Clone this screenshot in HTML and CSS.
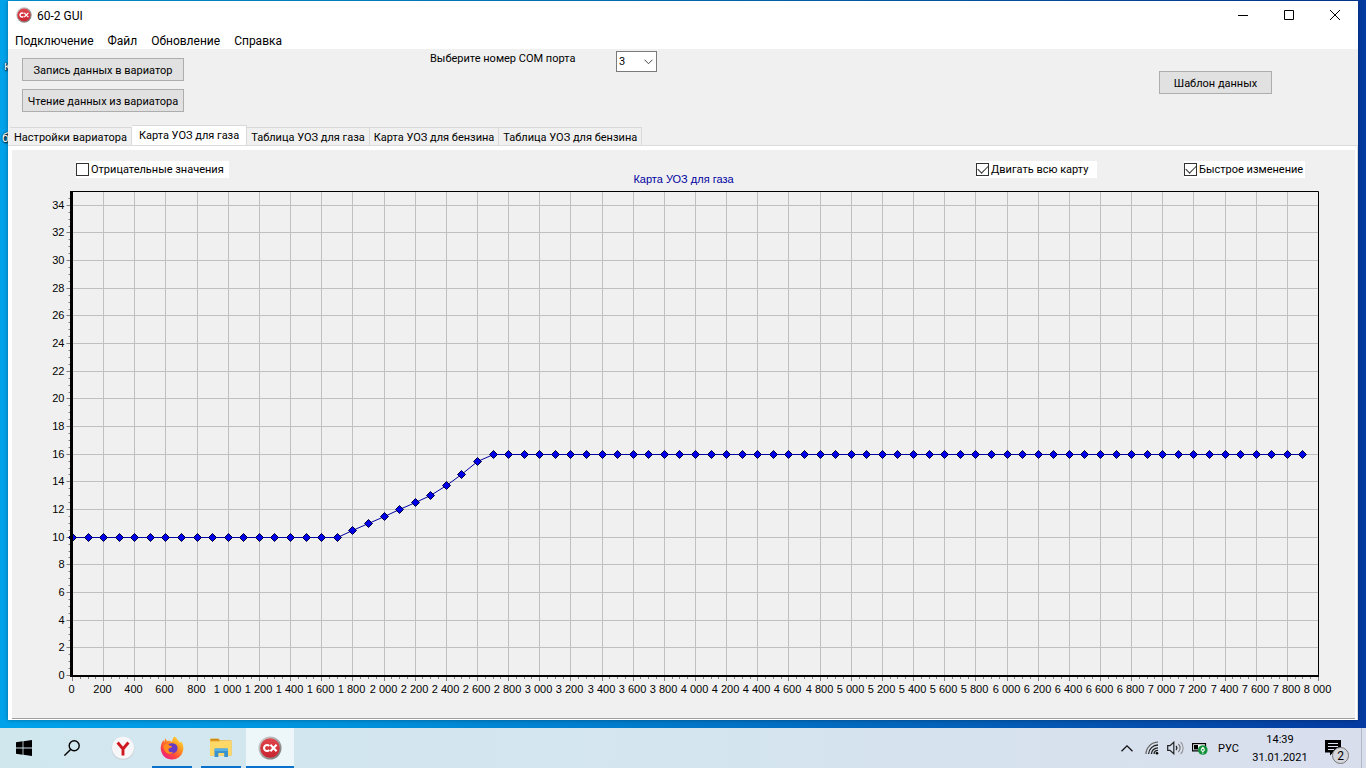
FILE: index.html
```html
<!DOCTYPE html>
<html lang="ru">
<head>
<meta charset="utf-8">
<title>60-2 GUI</title>
<link rel="stylesheet" href="styles.css">
</head>
<body>
<svg class="defs" width="0" height="0" aria-hidden="true">
  <defs>
    <linearGradient id="ring" x1="0" y1="0" x2="1" y2="1"><stop offset="0" stop-color="#d8d8d8"/><stop offset="1" stop-color="#6f6f6f"/></linearGradient>
    <linearGradient id="red" x1="0" y1="0" x2="0" y2="1"><stop offset="0" stop-color="#e0474e"/><stop offset="1" stop-color="#c82430"/></linearGradient>
    <linearGradient id="fox" x1="1" y1="0" x2="0.2" y2="1"><stop offset="0" stop-color="#fff04a"/><stop offset="0.4" stop-color="#ff9a1f"/><stop offset="0.7" stop-color="#ff4a3c"/><stop offset="1" stop-color="#e8188a"/></linearGradient>
    <symbol id="cx" viewBox="0 0 24 24">
      <circle cx="12" cy="12" r="11.5" fill="url(#ring)"/>
      <circle cx="12" cy="12" r="9.8" fill="url(#red)"/>
      <path d="M11.2 9.9A3 3 0 1 0 11.2 14.1M12.4 8.8L18.6 15.2M18.6 8.8L12.4 15.2" fill="none" stroke="#fff" stroke-width="2.1"/>
    </symbol>
  </defs>
</svg>

<div class="desktop">
  <span class="shortcut shortcut-top">к</span>
  <span class="shortcut shortcut-low">б</span>
  <main class="window">
    <header class="titlebar">
      <svg class="app-icon"><use href="#cx"/></svg>
      <h1 class="title">60-2 GUI</h1>
      <button class="win-btn" aria-label="Свернуть"><svg width="10" height="10" viewBox="0 0 10 10"><path d="M0 5.5H10"/></svg></button>
      <button class="win-btn" aria-label="Развернуть"><svg width="10" height="10" viewBox="0 0 10 10"><path d="M.5 .5H9.5V9.5H.5Z"/></svg></button>
      <button class="win-btn" aria-label="Закрыть"><svg width="10" height="10" viewBox="0 0 10 10"><path d="M0 0L10 10M10 0L0 10"/></svg></button>
    </header>
    <nav class="menubar">
      <button>Подключение</button>
      <button>Файл</button>
      <button>Обновление</button>
      <button>Справка</button>
    </nav>
    <section class="toolbar">
      <div class="data-buttons">
        <button class="btn">Запись данных в вариатор</button>
        <button class="btn">Чтение данных из вариатора</button>
      </div>
      <div class="port">
        <label for="port">Выберите номер COM порта</label>
        <div class="select-box">
          <select id="port"><option>3</option></select>
          <svg class="chevron" width="9" height="6" viewBox="0 0 9 6"><path d="M.5 .7L4.5 4.7L8.5 .7"/></svg>
        </div>
      </div>
      <button class="btn btn-template">Шаблон данных</button>
    </section>
    <div class="tabs" role="tablist">
      <button role="tab" class="tab">Настройки вариатора</button>
      <button role="tab" class="tab active" aria-selected="true">Карта УОЗ для газа</button>
      <button role="tab" class="tab">Таблица УОЗ для газа</button>
      <button role="tab" class="tab">Карта УОЗ для бензина</button>
      <button role="tab" class="tab">Таблица УОЗ для бензина</button>
    </div>
    <section class="page">
      <div class="sheet">
        <div class="options">
          <label class="check"><input type="checkbox">Отрицательные значения</label>
          <h2 class="chart-title">Карта УОЗ для газа</h2>
          <div class="options-right">
            <label class="check"><input type="checkbox" checked>Двигать всю карту</label>
            <label class="check"><input type="checkbox" checked>Быстрое изменение</label>
          </div>
        </div>
        <div class="chart"><svg id="chart"></svg></div>
      </div>
    </section>
  </main>
</div>

<footer class="taskbar">
  <button class="task" aria-label="Пуск"><svg width="16" height="16" viewBox="0 0 16 16"><path d="M0 2.2L6.6 1.3V7.6H0ZM7.4 1.2L16 0V7.6H7.4ZM0 8.4H6.6V14.7L0 13.8ZM7.4 8.4H16V16L7.4 14.8Z"/></svg></button>
  <button class="task" aria-label="Поиск"><svg width="16" height="16" viewBox="0 0 16 16" fill="none" stroke="#000" stroke-width="1.4"><circle cx="10.2" cy="5.8" r="5"/><path d="M6.6 9.4L.4 15.6"/></svg></button>
  <button class="task spaced" aria-label="Яндекс"><svg width="24" height="24" viewBox="0 0 24 24"><circle cx="12" cy="12.5" r="11.3" fill="#c8ccd2"/><circle cx="12" cy="11.8" r="11" fill="#f7f7f9"/><path d="M6.6 6.5L12 13L17.4 6.5M12 12.5V19.5" fill="none" stroke="#d01820" stroke-width="2.9"/></svg></button>
  <button class="task running" aria-label="Firefox"><svg width="24" height="24" viewBox="0 0 24 24"><path d="M14.5 .5C17 2 17.6 4 18.5 5L20.3 6.8L21 5.2C23 7.5 23.6 10.5 23.3 13A11.3 11.3 0 1 1 1.2 9C1.5 7 2.3 5.4 3.5 4.2L4.2 6L5.2 2.2L7 5C9 4.6 10.8 5.1 12 6C12.2 3.8 13 1.8 14.5 .5Z" fill="url(#fox)"/><path d="M8.2 8.5C11 6.6 16 6.8 17.3 10.6C18.5 14.7 15.6 17.4 12.2 17.4C8.8 17.4 7 15 7.1 12.3L9.2 12C11 12 11.4 11 12 10.2L9.6 9.7Z" fill="#673bc4"/><path d="M3.3 10C5 7 8.5 7.8 9.6 9.7L12.2 10.2C11.5 11.6 9.2 12 8.6 12.8C7.6 15.8 10.8 17.2 13.5 15.8C10.5 20 4 17.5 3.3 10Z" fill="#ff8a20"/></svg></button>
  <button class="task running" aria-label="Проводник"><svg width="22" height="20" viewBox="0 0 22 20"><path d="M0 1.5Q0 .5 1 .5H8.5L10 2.3H20.5Q21.5 2.3 21.5 3.3V17.5H0Z" fill="#eba937"/><path d="M0 3.5H9L10.5 2.8H21.5V17.5H0Z" fill="#ffd968"/><path d="M1 1H8.3L9.2 2.5H1Z" fill="#c98a14"/><path d="M4.5 19V11.5Q4.5 10.5 5.5 10.5H17Q18 10.5 18 11.5V19H14.2V15H8.3V19Z" fill="#3a92cf"/><path d="M4.5 11.5Q4.5 10.5 5.5 10.5H17Q18 10.5 18 11.5V13H4.5Z" fill="#58b1e4"/></svg></button>
  <button class="task running current" aria-label="60-2 GUI"><svg width="24" height="24"><use href="#cx"/></svg></button>
  <div class="tray">
    <svg width="12" height="7" viewBox="0 0 12 7" fill="none" stroke="#111" stroke-width="1.3"><path d="M.5 6.3L6 .9L11.5 6.3"/></svg>
    <svg class="wifi" width="14" height="14" viewBox="0 0 14 14" fill="none" stroke="#222" stroke-width="1.3"><path d="M1 13A12 12 0 0 1 13 1.2" stroke="#666"/><path d="M3.6 13A9.4 9.4 0 0 1 13 4"/><path d="M6.4 13A6.6 6.6 0 0 1 13 6.8"/><path d="M9 13A4 4 0 0 1 13 9.4"/><circle cx="12" cy="12.3" r="1.3" fill="#000" stroke="none"/></svg>
    <svg class="sound" width="17" height="14" viewBox="0 0 17 14" fill="none" stroke="#222" stroke-width="1.2"><path d="M.7 4.6H3L6.8 1.2V12.8L3 9.4H.7Z"/><path d="M9 5A3 3 0 0 1 9 9"/><path d="M11.3 3A5.5 5.5 0 0 1 11.3 11" stroke="#777"/><path d="M13.6 1A8.3 8.3 0 0 1 13.6 13" stroke="#999"/></svg>
    <svg class="battery" width="16" height="13" viewBox="0 0 16 13"><path d="M.6 1.6H13.5V8.9H.6Z" fill="#fff" stroke="#000" stroke-width="1.2"/><path d="M2 3H6V7.5H2Z"/><circle cx="10.8" cy="8" r="4.8" fill="#12923a"/><path d="M10.8 4.9Q8.7 6.8 9.2 8.6Q9.8 9.6 10.8 9.6Q11.9 9.6 12.4 8.6Q12.8 6.8 10.8 4.9ZM10.8 9V12" fill="#fff" stroke="#fff" stroke-width=".7"/><circle cx="10.8" cy="7.8" r=".9" fill="#12923a"/></svg>
    <span class="lang">РУС</span>
    <div class="clock"><time>14:39</time><span>31.01.2021</span></div>
    <button class="notify" aria-label="Уведомления">
      <svg width="16" height="16" viewBox="0 0 16 16"><path d="M0 0H16V12.5H8L5 15.5V12.5H0Z"/><path d="M3 3.5H13M3 6.5H13M3 9.5H9" stroke="#dce1ed"/></svg>
      <span class="badge">2</span>
    </button>
    <button class="show-desktop" aria-label="Свернуть все окна"></button>
  </div>
</footer>
<script src="chart.js"></script>
</body>
</html>
```
FILE: styles.css
```css
* { box-sizing: border-box; }

body {
  margin: 0;
  height: 100vh;
  display: flex;
  flex-direction: column;
  overflow: hidden;
  font-family: Roboto, Tahoma, sans-serif;
  font-size: 11px;
  color: #000;
}

button, select, input { font: inherit; color: inherit; }
button { border: 0; padding: 0; background: none; white-space: nowrap; }
h1, h2 { margin: 0; font-weight: 400; }
.defs { position: absolute; }

.desktop {
  position: relative;
  flex: 1;
  display: flex;
  padding: 1px 8px 8px;
  background: linear-gradient(90deg, #00a2ea 0%, #0092dc 25%, #0461b8 70%, #053aa0 100%);
}
.shortcut {
  position: absolute;
  left: 4px;
  font-size: 12px;
  color: #fff;
  text-shadow: 1px 1px 2px #000, 0 0 2px #000;
}
.shortcut-top { top: 59px; }
.shortcut-low { top: 131px; left: 2px; }

.window {
  position: relative;
  flex: 1;
  min-width: 0;
  display: flex;
  flex-direction: column;
  background: #f0f0f0;
  box-shadow: 0 0 4px rgba(0, 0, 0, .35);
}
.titlebar {
  display: flex;
  align-items: center;
  height: 28px;
  padding-left: 8px;
  background: #fff;
}
.app-icon { width: 16px; height: 16px; }
.title { flex: 1; padding: 2px 0 0 5px; font-size: 12px; }
.win-btn { width: 46px; height: 28px; display: grid; place-items: center; }
.win-btn path { fill: none; stroke: #000; }

.menubar { display: flex; gap: 14px; height: 20px; padding: 4px 0 0 7px; background: #fff; }
.menubar button { font-size: 12px; line-height: 16px; }

.toolbar { display: flex; align-items: flex-start; height: 76px; padding-right: 86px; }
.data-buttons { display: flex; flex-direction: column; gap: 8px; padding: 9px 0 0 14px; }
.btn { height: 23px; width: 162px; padding-top: 2px; background: #e1e1e1; border: 1px solid #adadad; }
.port { display: flex; align-items: flex-start; padding: 2px 0 0 246px; }
.port label { width: 186px; line-height: 16px; }
.select-box { position: relative; width: 41px; height: 21px; }
.select-box select {
  appearance: none;
  width: 100%;
  height: 100%;
  padding: 0 2px;
  background: #fff;
  border: 1px solid #7a7a7a;
  border-radius: 0;
}
.chevron { position: absolute; right: 4px; top: 8px; fill: none; stroke: #444; pointer-events: none; }
.btn-template { width: 113px; margin: 22px 0 0 auto; }

.tabs { display: flex; align-items: flex-end; height: 20px; padding-left: 2px; }
.tab {
  height: 18px;
  padding: 2px 4px 0;
  border: 1px solid #d9d9d9;
  border-width: 1px 1px 0 0;
}
.tab.active { height: 20px; padding: 0 7px 1px; background: #fff; }

.page {
  flex: 1;
  display: flex;
  min-height: 0;
  padding: 4px 2px 1px 4px;
  background: #fff;
  border: 1px solid #dcdcdc;
  border-width: 1px 1px 0 0;
}
.sheet {
  flex: 1;
  min-width: 0;
  display: flex;
  flex-direction: column;
  background: #f0f0f0;
  border-bottom: 1px solid #a0a0a0;
}
.options {
  display: grid;
  grid-template-columns: 1fr auto 1fr;
  align-items: start;
  height: 37px;
  padding: 11px 50px 0;
}
.options-right { display: flex; justify-content: flex-end; gap: 87px; }
.check { display: flex; align-items: center; gap: 2px; width: 121px; height: 17px; line-height: 17px; background: #fff; white-space: nowrap; }
.options > .check { width: 153px; margin-left: 14px; }
.check input {
  appearance: none;
  flex: none;
  display: grid;
  place-items: center;
  width: 13px;
  height: 13px;
  margin: 0;
  background: #fff;
  border: 1px solid #333;
}
.check input:checked::after {
  content: "";
  width: 9px;
  height: 5px;
  border: solid #333;
  border-width: 0 0 1px 1px;
  transform: translateY(-2px) rotate(-45deg);
}
.chart-title {
  align-self: end;
  font: 11px/16px "Liberation Sans", Arial, sans-serif;
  color: #0000a0;
}
.chart { flex: 1; min-height: 0; }
.chart svg { display: block; width: 100%; height: 100%; }
.grid { stroke: #c0c0c0; }
.tick { stroke: #808080; }
.frame { fill: none; stroke: #000; }
.axis-line { fill: #000; }
.series { fill: none; stroke: #0000a0; }
.marker { fill: #0000e6; stroke: #000040; }
.tick-label { font: 11px "Liberation Sans", Arial, sans-serif; fill: #000; }

.taskbar {
  flex: none;
  display: flex;
  height: 40px;
  gap: 1px;
  background: linear-gradient(90deg, #d1e7ee 0%, #d4e5ef 50%, #d9deed 100%);
}
.task { width: 48px; height: 40px; display: grid; place-items: center; position: relative; }
.task:first-child { margin-right: -1px; }
.task.spaced { margin-left: 2px; }
.task.running::after {
  content: "";
  position: absolute;
  left: 4px;
  right: 4px;
  bottom: 0;
  height: 2px;
  background: #0a72cc;
}
.task.current { background: #edf6f9; }
.task.current::after { left: 0; right: 0; }

.tray { display: flex; align-items: center; margin-left: auto; font-size: 11px; }
.wifi { margin-left: 12px; }
.sound { margin-left: 8px; }
.battery { margin-left: 8px; }
.lang { margin-left: 10px; width: 24px; }
.clock { display: flex; flex-direction: column; align-items: center; width: 76px; margin-right: 6px; padding-top: 1px; line-height: 18px; }
.notify { position: relative; width: 25px; height: 40px; padding-left: 1px; display: flex; align-items: center; }
.badge {
  position: absolute;
  left: 8px;
  top: 19px;
  width: 17px;
  height: 17px;
  border: 1px solid #777;
  border-radius: 50%;
  background: #d5d7dd;
  font-size: 12px;
  line-height: 16px;
  text-align: center;
}
.show-desktop { width: 5px; height: 40px; margin-left: 12px; border-left: 1px solid #b3b8c6; }
```
FILE: chart.js
```js
const svg = document.getElementById('chart');
const margin = { left: 60, right: 37, top: 4, bottom: 43 };
const maxX = 8000;
const maxY = 35;

// Ignition advance per 100 rpm
const ramp = [10.5, 11, 11.5, 12, 12.5, 13, 13.75, 14.5, 15.5];
const values = Array.from({ length: 80 }, (_, i) => i < 18 ? 10 : (ramp[i - 18] ?? 16));

function draw() {
  const { width, height } = svg.getBoundingClientRect();
  const right = Math.round(width - margin.right);
  const bottom = Math.round(height - margin.bottom);
  const px = v => Math.round(margin.left + v / maxX * (right - margin.left)) + 0.5;
  const py = v => Math.round(bottom - v / maxY * (bottom - margin.top)) + 0.5;
  const left = px(0);
  const top = py(maxY);
  let out = '';

  for (let v = 0; v <= maxX; v += 50) {
    const x = px(v);
    const major = v % 200 === 0;
    if (major) {
      out += `<path class="grid" d="M${x} ${top}V${py(0)}"/>`;
      const label = v < 1000 ? v : Math.floor(v / 1000) + ' ' + String(v % 1000).padStart(3, '0');
      out += `<text class="tick-label" text-anchor="middle" x="${x - 1}" y="${bottom + 18}">${label}</text>`;
    }
    out += `<path class="tick" d="M${x} ${bottom + 2}v${major ? 4 : 2}"/>`;
  }
  for (let v = 0; v < maxY; v += 0.5) {
    const y = py(v);
    const major = v % 2 === 0;
    if (major) {
      out += `<path class="grid" d="M${left} ${y}H${right}"/>`;
      out += `<text class="tick-label" text-anchor="end" x="${left - 8}" y="${y + 3}">${v}</text>`;
    }
    out += `<path class="tick" d="M${left - 2} ${y}h${major ? -4 : -2}"/>`;
  }
  out += `<path class="frame" d="M${left} ${top}H${px(maxX)}V${py(0)}"/>`;
  const points = values.map((v, i) => [px(i * 100), py(v)]);
  out += `<polyline class="series" points="${points.join(' ')}"/>`;
  for (const [x, y] of points) {
    out += `<path class="marker" d="M${x - 4} ${y}l4 -4l4 4l-4 4z"/>`;
  }
  out += `<path class="axis-line" d="M${left - 2.5} ${top - 0.5}h3V${bottom}H${px(maxX) + 0.5}v2H${left - 2.5}z"/>`;
  svg.innerHTML = out;
}

new ResizeObserver(draw).observe(svg);
draw();
```
